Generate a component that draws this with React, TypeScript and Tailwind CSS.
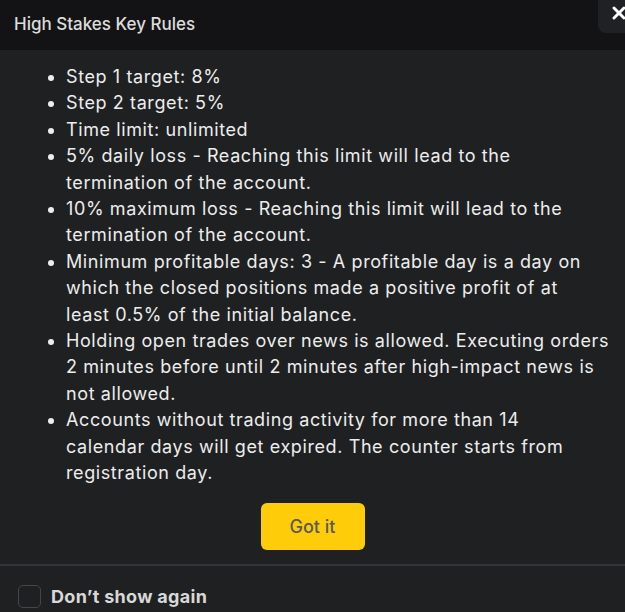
import { X } from 'lucide-react';

// lines kept as in the source layout
const rules: string[][] = [
  ['Step 1 target: 8%'],
  ['Step 2 target: 5%'],
  ['Time limit: unlimited'],
  ['5% daily loss - Reaching this limit will lead to the', 'termination of the account.'],
  ['10% maximum loss - Reaching this limit will lead to the', 'termination of the account.'],
  [
    'Minimum profitable days: 3 - A profitable day is a day on',
    'which the closed positions made a positive profit of at',
    'least 0.5% of the initial balance.',
  ],
  [
    'Holding open trades over news is allowed. Executing orders',
    '2 minutes before until 2 minutes after high-impact news is',
    'not allowed.',
  ],
  [
    'Accounts without trading activity for more than 14',
    'calendar days will get expired. The counter starts from',
    'registration day.',
  ],
];

export default function App() {
  return (
    <div className="w-[625px] h-[612px] overflow-hidden bg-[#1f2022] flex flex-col relative" style={{ fontFamily: "Inter, 'Noto Sans', sans-serif" }}>
      {/* Header */}
      <div className="h-[50px] bg-[#131316] flex items-center px-[14px] shrink-0">
        <h2 className="text-[17px] font-medium text-[#dcdcdc]">High Stakes Key Rules</h2>
      </div>
      <button className="absolute top-0 right-[-8px] w-[35px] h-[33px] bg-[#202124] rounded-bl-lg flex items-start justify-end pt-[3px] pr-[4px] text-white">
        <X className="w-[20px] h-[20px]" strokeWidth={3.5} />
      </button>

      {/* Body */}
      <div className="flex-1 flex flex-col">
        <ul className="pl-[66px] pr-[8px] pt-[14px] list-disc marker:text-[#eeeeee] text-[18px] leading-[26.4px] text-[#ededed] tracking-[0.6px] whitespace-nowrap">
          {rules.map((lines) => (
            <li key={lines[0]}>
              {lines.map((l, i) => (
                <span key={i}>
                  {i > 0 && <br />}
                  {l}
                </span>
              ))}
            </li>
          ))}
        </ul>
        <div className="flex justify-center mt-[16px]">
          <button className="w-[104px] h-[47px] rounded-md bg-[#ffcc0a] text-[#5a5a5a] text-[18px] font-medium">Got it</button>
        </div>
      </div>

      {/* Footer */}
      <div className="h-[48px] border-t-2 border-[#333437] flex items-center px-[18px] gap-[10px] shrink-0 pt-[14px]">
        <div className="w-[23px] h-[23px] rounded-[5px] border border-[#45464a]" />
        <span className="text-[18px] font-bold text-[#d8d8d8] tracking-[0.3px]">Don’t show again</span>
      </div>
    </div>
  );
}
